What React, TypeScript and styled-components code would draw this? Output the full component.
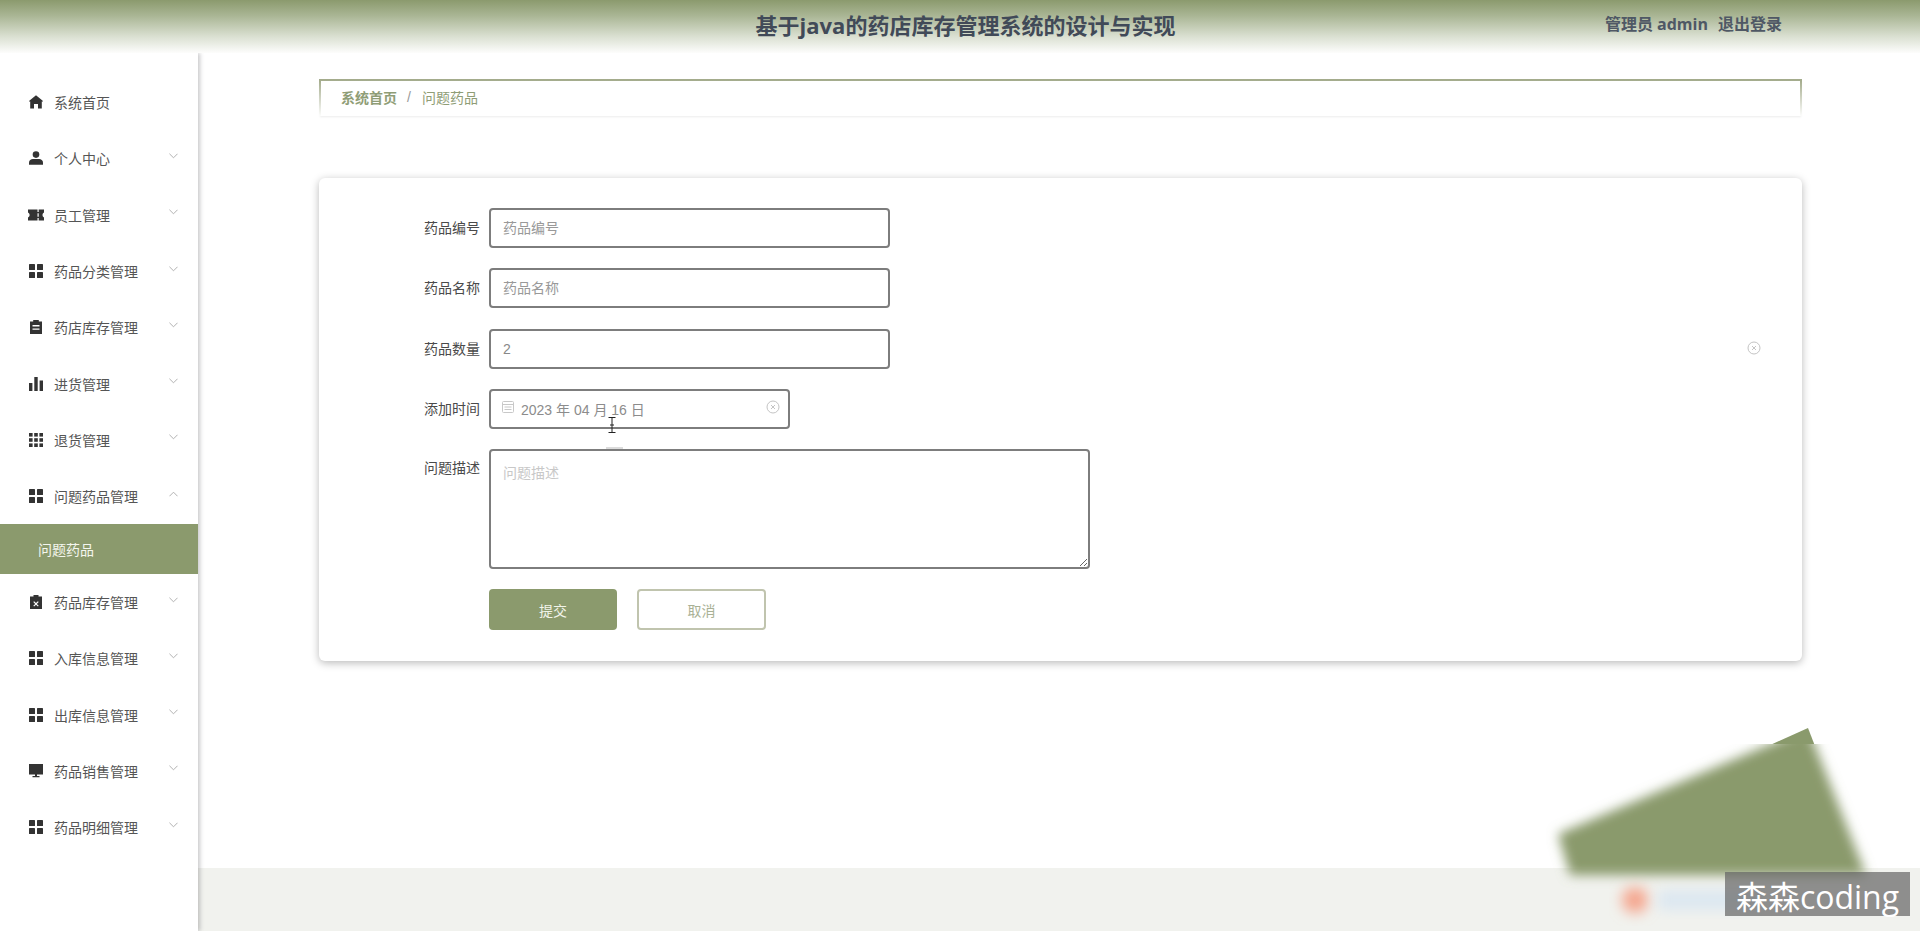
import React from "react";
import styled, { createGlobalStyle } from "styled-components";

const GlobalStyle = createGlobalStyle`
  html, body {
    margin: 0;
    padding: 0;
    height: 100%;
    overflow: hidden;
    background: #ffffff;
  }
  * {
    box-sizing: border-box;
  }
  body, input, textarea, button {
    font-family: "Liberation Sans", "Noto Sans CJK SC", sans-serif;
  }
`;

const ICONS: Record<string, React.ReactNode> = {
  home: <path d="M7 .2 14 6v.6h-1.200v6.900H9V9H5v4.500H1.200V6.600H0V6z" />,
  person: (
    <>
      <circle cx="7" cy="3.600" r="3.300" />
      <path d="M0 13.800v-2.300C0 9.300 2 8 3.800 8h6.400c1.800 0 3.800 1.300 3.800 3.500v2.300z" />
    </>
  ),
  ticket: <path d="M-1 1.500h9.500v2.500h1.200V1.500H15v3c-1 .4-1.500 1.400-1.500 2.500s.5 2.100 1.500 2.500v3H9.700V10H8.500v2.500H-1V9.500c1-.4 1.600-1.400 1.600-2.500S0 4.900-1 4.500zM8.500 5.200v3.600h1.200V5.200z" />,
  grid: (
    <>
      <rect x="0" y="0" width="6" height="6" rx=".6" />
      <rect x="8" y="0" width="6" height="6" rx=".6" />
      <rect x="0" y="8" width="6" height="6" rx=".6" />
      <rect x="8" y="8" width="6" height="6" rx=".6" />
    </>
  ),
  order: <path d="M4.200 0h5.600v1.400H13V14H1V1.400h3.200zM3.500 5v1.400h7V5zm0 3.400v1.400h7V8.400z" fillRule="evenodd" />,
  data: (
    <>
      <rect x="0" y="6" width="3.400" height="8" />
      <rect x="5.300" y="0" width="3.400" height="14" />
      <rect x="10.600" y="3.500" width="3.400" height="10.500" />
    </>
  ),
  grid9: (
    <>
      {[0, 5.200, 10.400].flatMap((y) =>
        [0, 5.200, 10.400].map((x) => <rect key={`${x}-${y}`} x={x} y={y} width="3.600" height="3.600" />)
      )}
    </>
  ),
  claim: <path d="M4.500 0h5v1.500H13V14H1V1.500h3.500zM5.100 6.200l1.900 1.900 1.900-1.900.8.8L7.800 8.900l1.900 1.900-.8.8L7 9.700l-1.900 1.900-.8-.8 1.900-1.900L4.300 7z" fillRule="evenodd" />,
  monitor: <path d="M0 0h14v10.500H8V12h2.500v1.200h-7V12H6v-1.500H0z" />,
};

const MENU = [
  { label: "系统首页", icon: "home", plain: true },
  { label: "个人中心", icon: "person" },
  { label: "员工管理", icon: "ticket" },
  { label: "药品分类管理", icon: "grid" },
  { label: "药店库存管理", icon: "order" },
  { label: "进货管理", icon: "data" },
  { label: "退货管理", icon: "grid9" },
  { label: "问题药品管理", icon: "grid", open: true, child: "问题药品" },
  { label: "药品库存管理", icon: "claim" },
  { label: "入库信息管理", icon: "grid" },
  { label: "出库信息管理", icon: "grid" },
  { label: "药品销售管理", icon: "monitor" },
  { label: "药品明细管理", icon: "grid" },
];

function Chevron({ up }: { up?: boolean }) {
  return (
    <ChevronSvg viewBox="0 0 10 6" fill="none" stroke="#a9a9a9" strokeWidth="1">
      <path d={up ? "M.5 5.500 5 1l4.500 4.500" : "M.5.500 5 5 9.500.500"} />
    </ChevronSvg>
  );
}

function ClearIcon() {
  return (
    <ClearSvg viewBox="0 0 14 14" fill="none" stroke="#c4c4c4" strokeWidth="1">
      <circle cx="7" cy="7" r="6" />
      <path d="M5 5l4 4M9 5l-4 4" />
    </ClearSvg>
  );
}

export default function App() {
  return (
    <Page>
      <GlobalStyle />
      <Header>
        <Title>基于java的药店库存管理系统的设计与实现</Title>
        <UserBar>
          <span>管理员 admin</span>
          <span>退出登录</span>
        </UserBar>
      </Header>
      <Body>
        <Sidebar>
          {MENU.map((item) => (
            <React.Fragment key={item.label}>
              <MenuItem>
                <MenuIcon viewBox="0 0 14 14">{ICONS[item.icon]}</MenuIcon>
                <span>{item.label}</span>
                {!item.plain && <Chevron up={item.open} />}
              </MenuItem>
              {item.child && <SubItem>{item.child}</SubItem>}
            </React.Fragment>
          ))}
        </Sidebar>
        <Main>
          <Content>
            <Breadcrumb>
              <strong>系统首页</strong>
              <Slash>/</Slash>
              <span>问题药品</span>
            </Breadcrumb>
            <FormCard>
              <Row>
                <Label>药品编号</Label>
                <TextInput placeholder="药品编号" readOnly />
              </Row>
              <Row>
                <Label>药品名称</Label>
                <TextInput placeholder="药品名称" readOnly />
              </Row>
              <Row>
                <Label>药品数量</Label>
                <TextInput value="2" readOnly />
                <StrayClear>
                  <ClearIcon />
                </StrayClear>
              </Row>
              <Row>
                <Label>添加时间</Label>
                <DateBox>
                  <CalendarSvg viewBox="0 0 12 12" fill="none" stroke="#c8c8c8" strokeWidth="1">
                    <rect x=".5" y=".5" width="11" height="11" rx="1" />
                    <path d="M.5 3.500h11M2.500 6h7M2.500 8.500h7" />
                  </CalendarSvg>
                  <DateText>2023 年 04 月 16 日</DateText>
                  <ClearIcon />
                </DateBox>
              </Row>
              <Row $top>
                <Label $top>问题描述</Label>
                <TextArea placeholder="问题描述" readOnly />
              </Row>
              <Buttons>
                <SubmitButton type="button">提交</SubmitButton>
                <CancelButton type="button">取消</CancelButton>
              </Buttons>
            </FormCard>
          </Content>
          <FooterStrip />
        </Main>
      </Body>

      <CursorSvg viewBox="0 0 10 16" fill="none" stroke="#222" strokeWidth="1">
        <path d="M1.500.5h7M5 .5v15M1.500 15.500h7M3 8h4" />
      </CursorSvg>
      <TextareaTick />

      <Smear viewBox="0 0 400 220">
        <defs>
          <filter id="soft" x="-20%" y="-20%" width="140%" height="140%">
            <feGaussianBlur stdDeviation="6" />
          </filter>
          <filter id="softer" x="-50%" y="-50%" width="200%" height="200%">
            <feGaussianBlur stdDeviation="7" />
          </filter>
          <clipPath id="above">
            <rect x="0" y="0" width="400" height="34" />
          </clipPath>
          <clipPath id="below">
            <rect x="0" y="34" width="400" height="186" />
          </clipPath>
        </defs>
        <polygon points="308,18 63,128 73,160 363,160" fill="#8a9a6c" clipPath="url(#above)" />
        <g clipPath="url(#below)">
          <polygon points="308,18 58,124 70,165 366,165" fill="#8a9a6c" filter="url(#soft)" />
        </g>
        <circle cx="135" cy="190" r="13" fill="#f5a48c" filter="url(#softer)" />
        <rect x="158" y="180" width="100" height="20" fill="#dbe7f1" filter="url(#softer)" />
      </Smear>
      <Watermark>森森coding</Watermark>
    </Page>
  );
}

const Page = styled.div`
  position: relative;
  display: flex;
  flex-direction: column;
  width: 1920px;
  height: 931px;
  overflow: hidden;
  background: #ffffff;
`;
const Header = styled.header`
  position: relative;
  z-index: 2;
  display: flex;
  align-items: center;
  justify-content: center;
  flex: none;
  height: 53px;
  padding-bottom: 4px;
  background: linear-gradient(180deg, #8b9a6d 0%, #aab695 30%, #d9dfd0 68%, #fdfdfc 100%);
`;
const Title = styled.h1`
  margin: 0 0 0 11px;
  font-family: "Open Sans", "Noto Sans CJK SC", sans-serif;
  font-size: 22px;
  font-weight: 700;
  line-height: 30px;
  color: #414a58;
`;
const UserBar = styled.div`
  position: absolute;
  top: 12px;
  right: 138px;
  display: flex;
  gap: 10px;
  font-family: "Open Sans", "Noto Sans CJK SC", sans-serif;
  font-size: 16px;
  font-weight: 700;
  line-height: 24px;
  color: #4f5865;
`;
const Body = styled.div`
  display: flex;
  flex: 1;
  min-height: 0;
`;
const Sidebar = styled.nav`
  position: relative;
  z-index: 1;
  flex: none;
  width: 198px;
  padding-top: 21px;
  background: #ffffff;
  box-shadow: 2px 0 4px rgba(60, 60, 70, 0.28);
`;
const MenuItem = styled.div`
  display: flex;
  align-items: center;
  height: 56.3px;
  padding: 0 20px 0 29px;
  font-size: 14px;
  color: #555555;
`;
const MenuIcon = styled.svg`
  flex: none;
  width: 14px;
  height: 14px;
  margin-right: 11px;
  overflow: visible;
  fill: #333333;
`;
const ChevronSvg = styled.svg`
  flex: none;
  width: 9px;
  height: 6px;
  margin: 0 0 5px auto;
`;
const SubItem = styled.div`
  display: flex;
  align-items: center;
  height: 49.5px;
  padding-left: 38px;
  font-size: 14px;
  color: #f4f6ee;
  background: #8b9a6d;
`;
const Main = styled.main`
  display: flex;
  flex-direction: column;
  flex: 1;
  min-width: 0;
`;
const Content = styled.div`
  flex: 1;
  padding: 26px 118px 0 121px;
  background: #ffffff;
`;
const Breadcrumb = styled.div`
  display: flex;
  align-items: center;
  height: 37px;
  padding: 0 20px 3px;
  border-top: 2px solid #a3ab8b;
  border-left: 2px solid;
  border-right: 2px solid;
  border-image: linear-gradient(180deg, #a3ab8b 0%, #ffffff 100%) 1;
  box-shadow: 0 2px 2px -1px rgba(0, 0, 0, 0.08);
  font-size: 14px;
  color: #8f9d76;
  strong {
    font-weight: 700;
  }
`;
const Slash = styled.span`
  margin: 0 11px 0 10px;
  color: #999999;
`;
const FormCard = styled.section`
  margin-top: 62px;
  padding: 30px 0 31px;
  border-radius: 6px;
  background: #ffffff;
  box-shadow: 0 2px 8px rgba(0, 0, 0, 0.28);
`;
const Row = styled.div<{ $top?: boolean }>`
  display: flex;
  align-items: ${(p) => (p.$top ? "flex-start" : "center")};
  margin-bottom: 20.3px;
`;
const Label = styled.label<{ $top?: boolean }>`
  flex: none;
  width: 161px;
  margin-right: 9px;
  padding-top: ${(p) => (p.$top ? "9px" : "0")};
  font-size: 14px;
  line-height: 20px;
  text-align: right;
  color: #4a4a4a;
`;
const TextInput = styled.input`
  width: 401px;
  height: 40px;
  padding: 0 12px;
  border: 2px solid #7d7d7d;
  border-radius: 4px;
  outline: none;
  font-size: 14px;
  color: #888888;
  background: #ffffff;
  &::placeholder {
    color: #999999;
  }
`;
const StrayClear = styled.div`
  display: flex;
  margin: 0 41px 2px auto;
`;
const ClearSvg = styled.svg`
  flex: none;
  width: 14px;
  height: 14px;
`;
const DateBox = styled.div`
  display: flex;
  align-items: center;
  width: 301px;
  height: 40px;
  padding: 0 8px 4px 11px;
  border: 2px solid #7d7d7d;
  border-radius: 4px;
  background: #ffffff;
`;
const CalendarSvg = styled.svg`
  flex: none;
  width: 12px;
  height: 12px;
  margin-right: 7px;
`;
const DateText = styled.span`
  flex: 1;
  padding-top: 4px;
  font-size: 14px;
  color: #8c8c8c;
`;
const TextArea = styled.textarea`
  display: block;
  width: 601px;
  height: 120px;
  padding: 12px 12px;
  border: 2px solid #7d7d7d;
  border-radius: 4px;
  outline: none;
  font-size: 14px;
  line-height: 20px;
  resize: vertical;
  &::placeholder {
    color: #c8c8c8;
  }
`;
const Buttons = styled.div`
  display: flex;
  gap: 20px;
  margin-left: 170px;
`;
const SubmitButton = styled.button`
  width: 128px;
  height: 40.5px;
  border: none;
  border-radius: 4px;
  font-size: 14px;
  color: #f2f4ea;
  background: #8b9a6d;
`;
const CancelButton = styled.button`
  width: 129px;
  height: 40.5px;
  border: 2px solid #c0c4ae;
  border-radius: 4px;
  font-size: 14px;
  color: #a9b195;
  background: #ffffff;
`;
const FooterStrip = styled.div`
  flex: none;
  height: 63px;
  background: #f1f2ee;
`;
const CursorSvg = styled.svg`
  position: absolute;
  left: 607px;
  top: 417px;
  width: 10px;
  height: 16px;
`;
const TextareaTick = styled.div`
  position: absolute;
  left: 606px;
  top: 447px;
  width: 17px;
  height: 2px;
  background: #dcdcdc;
`;
const Smear = styled.svg`
  position: absolute;
  left: 1500px;
  top: 710px;
  width: 400px;
  height: 220px;
`;
const Watermark = styled.div`
  position: absolute;
  left: 1725px;
  top: 872px;
  display: flex;
  align-items: center;
  justify-content: center;
  width: 185px;
  height: 44px;
  padding-top: 2px;
  font-family: "Open Sans", "Noto Sans CJK SC", sans-serif;
  font-size: 32px;
  color: #ffffff;
  background: rgba(100, 100, 100, 0.7);
`;
